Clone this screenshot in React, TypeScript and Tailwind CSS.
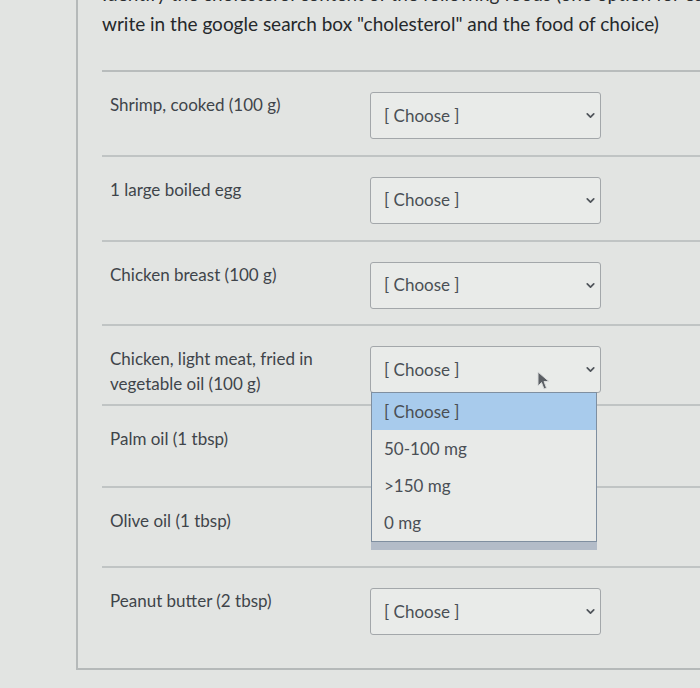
import { ChevronDown } from 'lucide-react'

interface Row {
  label: string[]
  height: string
  select: boolean
}

const ROWS: Row[] = [
  { label: ['Shrimp, cooked (100 g)'], height: 'h-[85px]', select: true },
  { label: ['1 large boiled egg'], height: 'h-[85px]', select: true },
  { label: ['Chicken breast (100 g)'], height: 'h-[85px]', select: true },
  { label: ['Chicken, light meat, fried in', 'vegetable oil (100 g)'], height: 'h-[80px]', select: true },
  { label: ['Palm oil (1 tbsp)'], height: 'h-[82px]', select: false },
  { label: ['Olive oil (1 tbsp)'], height: 'h-[80px]', select: false },
  { label: ['Peanut butter (2 tbsp)'], height: 'h-[100px]', select: true },
]

const OPTIONS = ['[ Choose ]', '50-100 mg', '>150 mg', '0 mg']

function SelectBox({ open }: { open?: boolean }) {
  return (
    <div className="relative w-[231px]">
      <div className="h-[47px] rounded-[3px] border border-[#a3a7aa] bg-[#e9ebe9] flex items-center justify-between pl-[13px] pr-[3px]">
        <span className="text-[17px] text-[#4a4f55]">[ Choose ]</span>
        <ChevronDown size={13} strokeWidth={3.2} className="text-[#50555b]" />
      </div>
      {open && (
        <>
          <div className="absolute left-[1px] top-[46px] w-[226px] border border-[#7f8fa0] bg-[#e8eae8] shadow-[0_8px_0_#b3bcc8] z-10">
            {OPTIONS.map((opt, i) => (
              <div
                key={opt}
                className={`h-[37px] flex items-center pl-[12px] text-[17px] text-[#4a4f55] ${i === 0 ? 'bg-[#a8cbec]' : ''}`}
              >
                {opt}
              </div>
            ))}
          </div>
          {/* mouse pointer */}
          <svg className="absolute left-[166px] top-[25px] z-20" width="16" height="20" viewBox="0 0 16 20">
            <path d="M2 1 L2 15 L5.5 11.5 L8 18 L10.5 17 L8 10.5 L13 10.5 Z" fill="#5b5f64" stroke="#d8dada" strokeWidth="1" />
          </svg>
        </>
      )}
    </div>
  )
}

export default function App() {
  return (
    <div className="w-[700px] h-[688px] overflow-hidden bg-[#e2e4e2] flex font-['Lato','Noto_Sans',sans-serif]">
      <div className="w-[76px] shrink-0" />
      <div className="flex-1 h-[670px] border-l-2 border-b-2 border-[#b5b9b9] pl-[24px] flex flex-col">
        {/* cut-off line above the prompt */}
        <div className="-mt-[17px] h-[22px] text-[19px] leading-[22px] text-[#2a2d30] whitespace-nowrap overflow-hidden">
          Identify the cholesterol content of the following foods (one option for each, or
        </div>
        <div className="h-[65px] text-[19px] leading-[28px] text-[#25282b] whitespace-nowrap pt-[5px]">
          write in the google search box "cholesterol" and the food of choice)
        </div>
        <div className="border-t-2 border-[#b8bcbc]" />
        {ROWS.map((row, i) => (
          <div
            key={i}
            className={`${row.height} flex items-start pt-[20px] ${i < ROWS.length - 1 ? 'border-b-2 border-[#c0c4c4]' : ''}`}
          >
            <div className="w-[268px] pl-[8px] text-[17px] leading-[25px] text-[#3f444a]">
              {row.label.map((l) => (
                <div key={l}>{l}</div>
              ))}
            </div>
            {row.select && <SelectBox open={i === 3} />}
          </div>
        ))}
      </div>
    </div>
  )
}
